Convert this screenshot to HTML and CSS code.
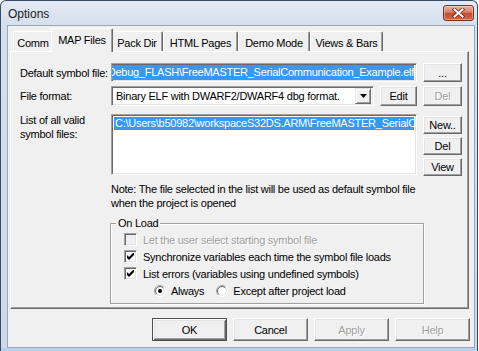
FILE: index.html
```html
<!DOCTYPE html>
<html>
<head>
<meta charset="utf-8">
<title>Options</title>
<link rel="stylesheet" href="styles.css">
</head>
<body>
<div class="window">
  <div class="titlebar">
    <span class="title">Options</span>
    <span class="close">
      <svg width="13" height="10" viewBox="0 0 13 10">
        <path d="M2.5 1.5 L10.5 8.5 M10.5 1.5 L2.5 8.5" stroke="#6a2518" stroke-width="3.6" stroke-linecap="square" fill="none"/>
        <path d="M2.5 1.5 L10.5 8.5 M10.5 1.5 L2.5 8.5" stroke="#ffffff" stroke-width="2" stroke-linecap="square" fill="none"/>
      </svg>
    </span>
  </div>
  <div class="client">
    <div class="tabs">
      <div class="tab t-comm">Comm</div>
      <div class="tab active t-map">MAP Files</div>
      <div class="tab t-pack">Pack Dir</div>
      <div class="tab t-html">HTML Pages</div>
      <div class="tab t-demo">Demo Mode</div>
      <div class="tab t-views">Views &amp; Bars</div>
    </div>
    <div class="panel">
      <div class="row r1">
        <span class="lbl">Default symbol file:</span>
        <div class="edit"><span class="sel">Debug_FLASH\FreeMASTER_SerialCommunication_Example.elf</span></div>
        <button class="btn side">...</button>
      </div>
      <div class="row r2">
        <span class="lbl">File format:</span>
        <div class="combo">
          <span class="ctext">Binary ELF with DWARF2/DWARF4 dbg format.</span>
          <span class="drop"><svg width="7" height="4" viewBox="0 0 7 4"><path d="M0 0 H7 L3.5 4 Z" fill="#000"/></svg></span>
        </div>
        <button class="btn edit-btn">Edit</button>
        <button class="btn side" disabled>Del</button>
      </div>
      <div class="row r3">
        <span class="lbl two">List of all valid<br>symbol files:</span>
        <div class="list">
          <div class="item selected">C:\Users\b50982\workspaceS32DS.ARM\FreeMASTER_SerialCommunication_Example\Debug_FLASH\FreeMASTER_SerialCommunication_Example.elf</div>
        </div>
        <div class="side-col">
          <button class="btn">New..</button>
          <button class="btn">Del</button>
          <button class="btn">View</button>
        </div>
      </div>
      <p class="note">Note: The file selected in the list will be used as default symbol file<br>when the project is opened</p>
      <fieldset class="group">
        <legend>On Load</legend>
        <div class="group-body">
          <div class="check disabled"><span class="box"></span>Let the user select starting symbol file</div>
          <div class="check"><span class="box"><svg width="7" height="7" viewBox="0 0 7 7"><path d="M0 2 L2 4 L7 -1 L7 2 L2 7 L0 5 Z" fill="#000"/></svg></span>Synchronize variables each time the symbol file loads</div>
          <div class="check"><span class="box"><svg width="7" height="7" viewBox="0 0 7 7"><path d="M0 2 L2 4 L7 -1 L7 2 L2 7 L0 5 Z" fill="#000"/></svg></span>List errors (variables using undefined symbols)</div>
          <div class="radios">
            <span class="radio"><svg width="12" height="12" viewBox="0 0 12 12"><circle cx="6" cy="6" r="5.5" fill="#fff" stroke="#fff"/><path d="M2.1 9.9 A5.5 5.5 0 0 1 9.9 2.1" stroke="#a0a0a0" fill="none"/><circle cx="6" cy="6" r="4.5" fill="#fff" stroke="#e3e3e3"/><path d="M2.8 9.2 A4.5 4.5 0 0 1 9.2 2.8" stroke="#696969" fill="none"/><circle cx="6" cy="6" r="2" fill="#000"/></svg></span><span class="rtext">Always</span>
            <span class="radio r-second"><svg width="12" height="12" viewBox="0 0 12 12"><circle cx="6" cy="6" r="5.5" fill="#fff" stroke="#fff"/><path d="M2.1 9.9 A5.5 5.5 0 0 1 9.9 2.1" stroke="#a0a0a0" fill="none"/><circle cx="6" cy="6" r="4.5" fill="#fff" stroke="#e3e3e3"/><path d="M2.8 9.2 A4.5 4.5 0 0 1 9.2 2.8" stroke="#696969" fill="none"/></svg></span><span class="rtext">Except after project load</span>
          </div>
        </div>
      </fieldset>
    </div>
    <div class="buttons">
      <button class="btn big default">OK</button>
      <button class="btn big">Cancel</button>
      <button class="btn big" disabled>Apply</button>
      <button class="btn big" disabled>Help</button>
    </div>
  </div>
  <div class="bottomframe"></div>
</div>
</body>
</html>
```

FILE: styles.css
```css
* { box-sizing: border-box; }
html, body { margin: 0; padding: 0; }
body {
  background: #ffffff;
  font-family: "Liberation Sans", Arial, sans-serif;
  font-size: 11px;
  letter-spacing: -0.25px;
  color: #000;
}

.window {
  width: 478px;
  height: 351px;
  display: flex;
  flex-direction: column;
  border: 1px solid #3a4c63;
  border-bottom: 0;
  border-radius: 6px 6px 0 0;
  background: linear-gradient(#e2eaf4, #d4dfec 26px, #cdd9e7);
  overflow: hidden;
}

.titlebar {
  height: 24px;
  flex: none;
  display: flex;
  justify-content: space-between;
  align-items: flex-start;
  padding: 0 3px 0 7px;
}
.title {
  font-size: 12px;
  letter-spacing: 0;
  line-height: 15px;
  margin-top: 6px;
  color: #1a1a1a;
}
.close {
  width: 31px;
  height: 16px;
  margin-top: 4px;
  border: 1px solid #75301f;
  border-radius: 3px;
  background: linear-gradient(#eab2a2, #d98068 45%, #c74a2f 52%, #cf6a4c);
  box-shadow: inset 0 0 0 1px rgba(255, 255, 255, 0.35);
  display: flex;
  align-items: center;
  justify-content: center;
}

.client {
  flex: 1;
  margin: 0 2px 0 6px;
  border: 1px solid #95a7bd;
  background: #f0f0f0;
  display: flex;
  flex-direction: column;
}
.bottomframe {
  height: 3px;
  flex: none;
  background: #b8d0ea;
}

/* tabs */
.tabs {
  height: 25px;
  flex: none;
  display: flex;
  align-items: flex-end;
  padding-left: 5px;
  position: relative;
  z-index: 1;
}
.tab {
  height: 20px;
  border: 1px solid;
  border-color: #fff #696969 transparent #fff;
  border-bottom: 0;
  border-radius: 2px 2px 0 0;
  box-shadow: inset -1px 0 #a0a0a0;
  background: #f0f0f0;
  text-align: center;
  padding-top: 5px;
  line-height: 13px;
  white-space: nowrap;
}
.tab.active {
  height: 24px;
  margin: 0 -2px -1px -2px;
  padding-top: 5px;
  position: relative;
  z-index: 2;
}
.t-comm { width: 40px; }
.t-map { width: 62px; }
.t-pack { width: 52px; }
.t-html { width: 75px; }
.t-demo { width: 72px; }
.t-views { width: 73px; }

.panel {
  width: 459px;
  height: 258px;
  flex: none;
  margin-left: 2px;
  border: 1px solid;
  border-color: #fff #696969 #696969 #fff;
  box-shadow: inset -1px -1px #a0a0a0;
  padding: 11px 0 0 9px;
}

.row { display: flex; align-items: center; }
.lbl { width: 91px; flex: none; white-space: nowrap; }

.btn {
  appearance: none;
  font: inherit;
  letter-spacing: inherit;
  color: #000;
  background: #f0f0f0;
  border: 1px solid;
  border-color: #fff #696969 #696969 #fff;
  box-shadow: inset -1px -1px #a0a0a0, inset 1px 1px #e3e3e3;
  padding: 0;
  margin: 0;
  flex: none;
}
.btn:disabled {
  color: #a0a0a0;
  text-shadow: 1px 1px #fff;
}
.btn.default {
  border-color: #505050;
  box-shadow: inset 1px 1px #fff, inset -1px -1px #696969, inset 2px 2px #e3e3e3, inset -2px -2px #a0a0a0;
}

.sunken {
  border: 1px solid;
}
.edit, .combo, .list {
  flex: none;
  width: 306px;
  background: #fff;
  border: 1px solid;
  border-color: #a0a0a0 #fff #fff #a0a0a0;
  box-shadow: inset 1px 1px #696969, inset -1px -1px #e3e3e3;
}

.r1 { height: 19px; }
.edit {
  height: 19px;
  padding: 1px 2px;
  display: flex;
  justify-content: flex-end;
  align-items: center;
  overflow: hidden;
}
.sel {
  flex: none;
  white-space: nowrap;
  background: #3399ff;
  color: #fff;
  line-height: 15px;
}
.side { width: 39px; height: 19px; margin-left: 6px; }

.r2 { height: 20px; margin-top: 4px; }
.combo {
  width: 263px;
  height: 20px;
  display: flex;
  align-items: center;
  padding: 2px 2px 2px 4px;
}
.ctext { flex: 1; white-space: nowrap; overflow: hidden; }
.drop {
  width: 16px;
  height: 16px;
  flex: none;
  background: #f0f0f0;
  border: 1px solid;
  border-color: #e3e3e3 #696969 #696969 #e3e3e3;
  box-shadow: inset 1px 1px #fff, inset -1px -1px #a0a0a0;
  display: flex;
  align-items: center;
  justify-content: center;
}
.edit-btn { width: 37px; height: 20px; margin-left: 6px; }
.r2 .side { height: 20px; }

.r3 { margin-top: 8px; align-items: flex-start; }
.lbl.two { line-height: 14px; margin-top: -1px; }
.list {
  height: 61px;
  padding: 2px;
  overflow: hidden;
}
.item {
  white-space: nowrap;
  overflow: hidden;
  line-height: 13px;
  height: 13px;
  padding-left: 1px;
}
.item.selected { background: #3399ff; color: #fff; }
.side-col {
  display: flex;
  flex-direction: column;
  gap: 3px;
  padding-top: 2px;
  margin-left: 6px;
}
.side-col .btn { width: 39px; height: 18px; }

.note {
  margin: 6px 0 0 91px;
  line-height: 14px;
  white-space: nowrap;
}

.group {
  margin: 6px 0 0 90px;
  width: 314px;
  height: 88px;
  padding: 0;
  min-width: 0;
  border: 1px solid #a0a0a0;
  box-shadow: inset 1px 1px #fff, 1px 1px #fff;
}
.group legend {
  margin-left: 5px;
  padding: 0 2px;
  line-height: 14px;
  background: #f0f0f0;
}
.group-body { padding: 1px 0 0 13px; }
.check, .radios {
  height: 17px;
  display: flex;
  align-items: center;
  white-space: nowrap;
}
.box {
  width: 13px;
  height: 13px;
  flex: none;
  margin-right: 6px;
  background: #fff;
  border: 1px solid;
  border-color: #a0a0a0 #fff #fff #a0a0a0;
  box-shadow: inset 1px 1px #696969, inset -1px -1px #e3e3e3;
  display: flex;
  align-items: center;
  justify-content: center;
}
.check.disabled { color: #a0a0a0; text-shadow: 1px 1px #fff; }
.check.disabled .box { background: #f0f0f0; }

.radios { padding-left: 30px; }
.radio { width: 12px; height: 12px; flex: none; margin-right: 5px; display: flex; }
.r-second { margin-left: 12px; }

.buttons {
  display: flex;
  justify-content: flex-end;
  gap: 6px;
  width: 460px;
  margin: 9px 0 0 2px;
}
.big { width: 75px; height: 23px; }
```
